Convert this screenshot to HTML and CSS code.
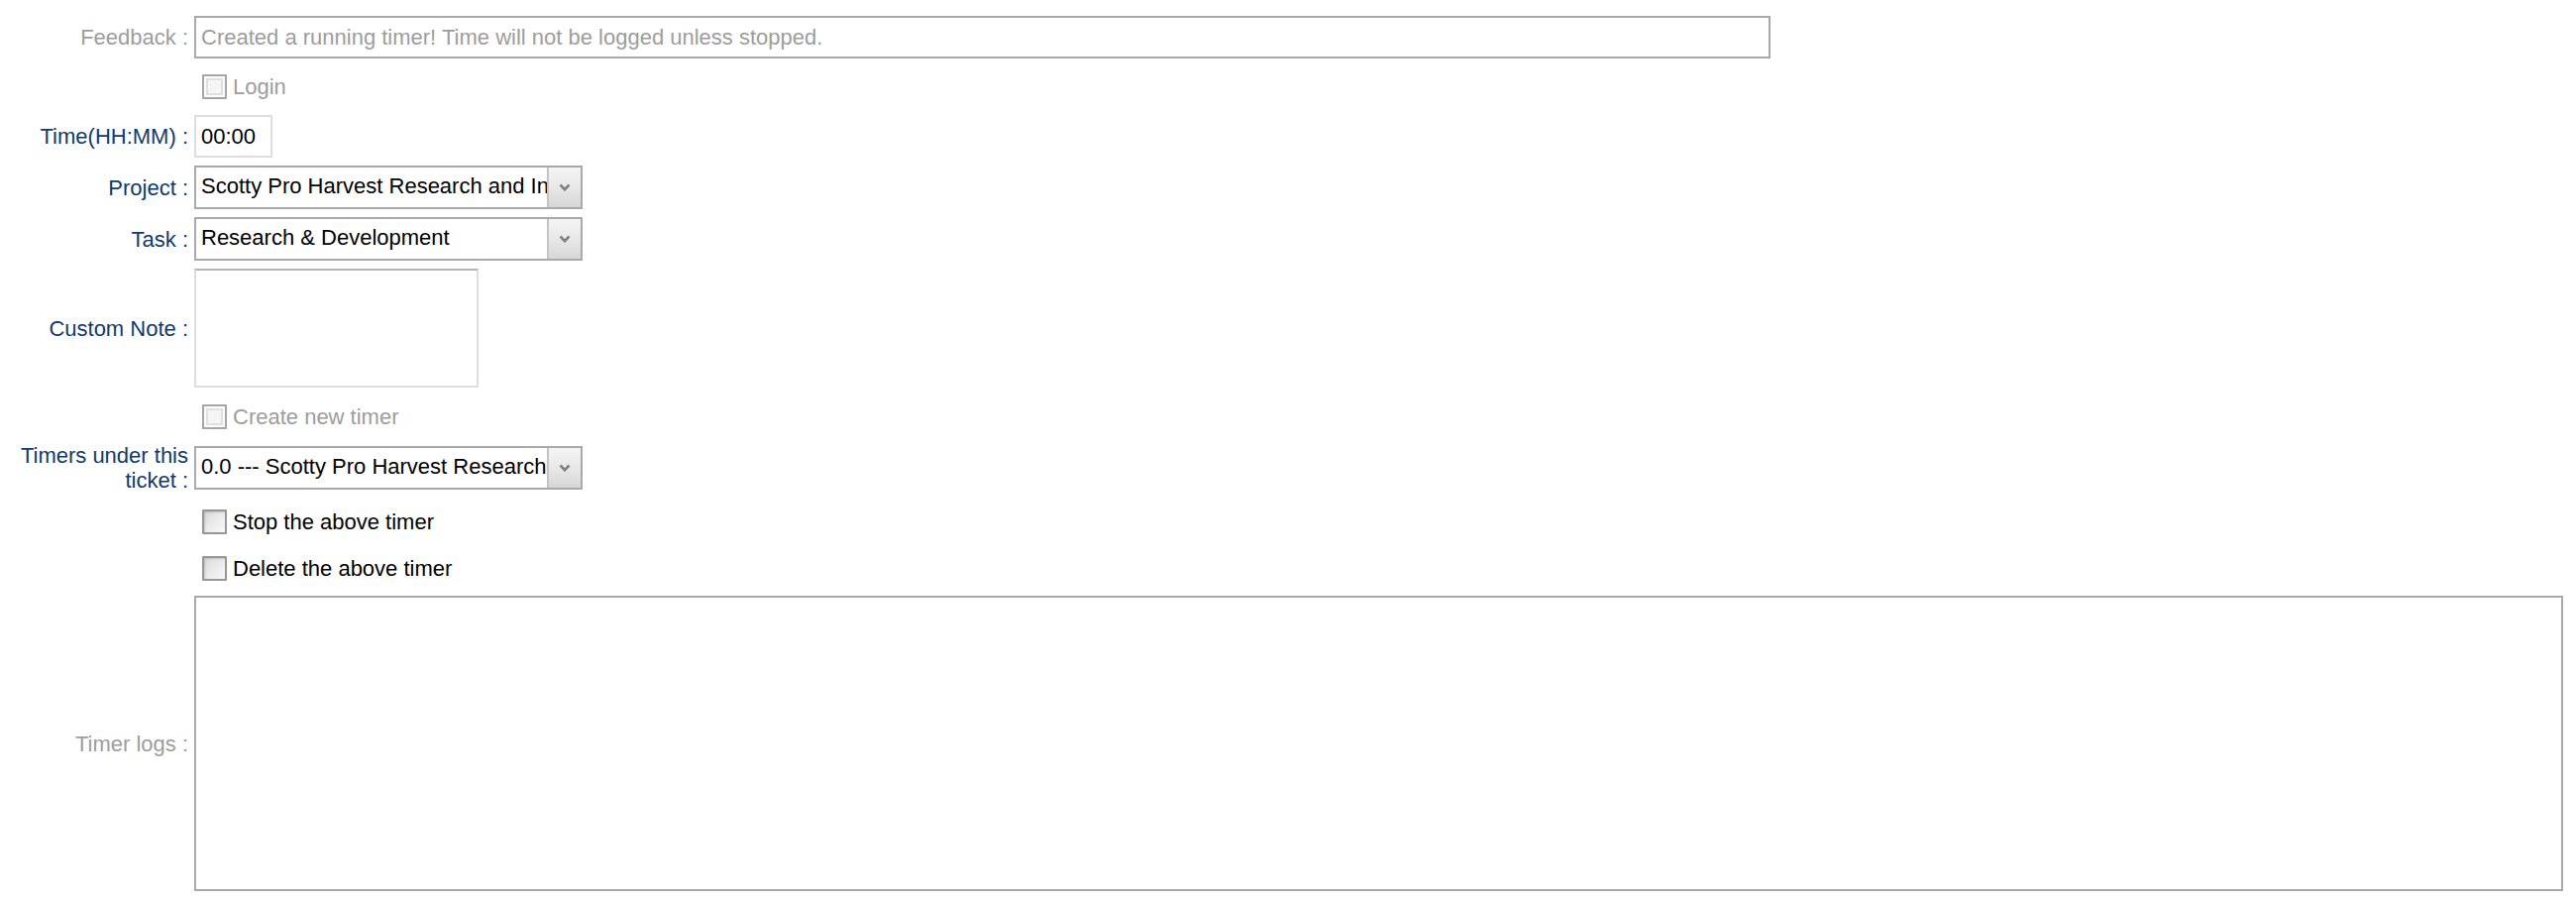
FILE: index.html
```html
<!DOCTYPE html>
<html lang="en">
<head>
<meta charset="utf-8">
<title>Timer</title>
<link rel="stylesheet" href="styles.css">
</head>
<body>
<form class="timer-form">
  <label class="lbl muted">Feedback :</label>
  <div class="feedback">Created a running timer! Time will not be logged unless stopped.</div>

  <div class="check-row row-login">
    <input type="checkbox" class="cb cb-off" disabled>
    <span class="cb-text muted">Login</span>
  </div>

  <label class="lbl">Time(HH:MM) :</label>
  <div class="field"><input class="time-input" type="text" value="00:00"></div>

  <label class="lbl">Project :</label>
  <div class="field">
    <div class="select">
      <span class="select-value">Scotty Pro Harvest Research and Innovation</span>
      <span class="select-arrow"><svg width="12" height="8" viewBox="0 0 12 8"><path d="M1.5 1.5 L6 6.2 L10.5 1.5" fill="none" stroke="#808080" stroke-width="2.6"/></svg></span>
    </div>
  </div>

  <label class="lbl">Task :</label>
  <div class="field">
    <div class="select">
      <span class="select-value">Research &amp; Development</span>
      <span class="select-arrow"><svg width="12" height="8" viewBox="0 0 12 8"><path d="M1.5 1.5 L6 6.2 L10.5 1.5" fill="none" stroke="#808080" stroke-width="2.6"/></svg></span>
    </div>
  </div>

  <label class="lbl">Custom Note :</label>
  <div class="field"><textarea class="note"></textarea></div>

  <div class="check-row row-create">
    <input type="checkbox" class="cb cb-off" disabled>
    <span class="cb-text muted">Create new timer</span>
  </div>

  <label class="lbl lbl-two">Timers under this<br>ticket :</label>
  <div class="field">
    <div class="select">
      <span class="select-value">0.0 --- Scotty Pro Harvest Research and Innovation</span>
      <span class="select-arrow"><svg width="12" height="8" viewBox="0 0 12 8"><path d="M1.5 1.5 L6 6.2 L10.5 1.5" fill="none" stroke="#808080" stroke-width="2.6"/></svg></span>
    </div>
  </div>

  <div class="check-row row-stop">
    <input type="checkbox" class="cb">
    <span class="cb-text">Stop the above timer</span>
  </div>

  <div class="check-row row-delete">
    <input type="checkbox" class="cb">
    <span class="cb-text">Delete the above timer</span>
  </div>

  <label class="lbl muted">Timer logs :</label>
  <div class="field"><div class="logs"></div></div>
</form>
</body>
</html>
```

FILE: styles.css
```css
html, body {
  margin: 0;
  padding: 0;
  background: #ffffff;
}

body {
  font-family: "Liberation Sans", Arial, Helvetica, sans-serif;
  font-size: 22px;
  line-height: 25px;
  color: #000;
}

.timer-form {
  display: grid;
  grid-template-columns: 190px 1fr;
  column-gap: 6px;
  row-gap: 8px;
  padding: 16px 13px 0 0;
}

.lbl {
  align-self: center;
  text-align: right;
  color: #123a6c;
  white-space: nowrap;
}

.lbl-two {
  margin: -3px 0;
}

.lbl.muted,
.muted {
  color: #9d9d9d;
}

.field {
  display: flex;
  align-items: center;
}

.feedback {
  box-sizing: border-box;
  width: 1591px;
  height: 43px;
  border: 2px solid #a9a9a9;
  padding: 0 5px;
  line-height: 39px;
  color: #9d9d9d;
  white-space: nowrap;
  overflow: hidden;
}

.check-row {
  grid-column: 2;
  display: flex;
  align-items: center;
  gap: 6px;
  padding-left: 8px;
}

.row-login { height: 41px; }
.row-create { height: 43px; }
.row-stop { height: 48px; }
.row-delete { height: 31px; margin-bottom: 4px; }

.cb {
  appearance: none;
  -webkit-appearance: none;
  box-sizing: border-box;
  width: 25px;
  height: 25px;
  margin: 0;
  border: 2px solid #979797;
  border-radius: 1px;
  background: linear-gradient(135deg, #d6d6d6 0%, #e9e9e9 45%, #f8f8f8 100%);
  box-shadow: inset 1px 1px 2px rgba(0, 0, 0, 0.14);
  flex: none;
}

.cb-off {
  border-color: #a5a5a5;
  background: #f5f5f5;
  box-shadow: inset 0 0 0 2px #fdfdfd, inset 0 0 0 4px #e0e0e0;
}

.cb-text {
  white-space: nowrap;
}

.time-input {
  box-sizing: border-box;
  width: 79px;
  height: 43px;
  margin: 0;
  border: 2px solid #dddddd;
  padding: 0 5px;
  font: inherit;
  color: #000;
  background: #fff;
  outline: none;
}

.select {
  box-sizing: border-box;
  width: 392px;
  height: 44px;
  border: 2px solid #a9a9a9;
  display: flex;
  align-items: stretch;
  background: #fff;
}

.select-value {
  flex: 1;
  min-width: 0;
  overflow: hidden;
  white-space: nowrap;
  padding-left: 5px;
  line-height: 38px;
  color: #000;
}

.select-arrow {
  flex: none;
  width: 32px;
  display: flex;
  align-items: center;
  justify-content: center;
  border-left: 2px solid #c4c4c4;
  background: linear-gradient(to bottom, #f4f4f4 0%, #e8e8e8 50%, #d6d6d6 100%);
}

.note {
  box-sizing: border-box;
  width: 287px;
  height: 120px;
  margin: 0;
  border: 2px solid #dddddd;
  border-top-color: #b4b4b4;
  padding: 4px;
  resize: none;
  font: inherit;
  background: #fff;
  outline: none;
}

.logs {
  box-sizing: border-box;
  width: 100%;
  height: 298px;
  border: 2px solid #a9a9a9;
  background: #fff;
}
```
